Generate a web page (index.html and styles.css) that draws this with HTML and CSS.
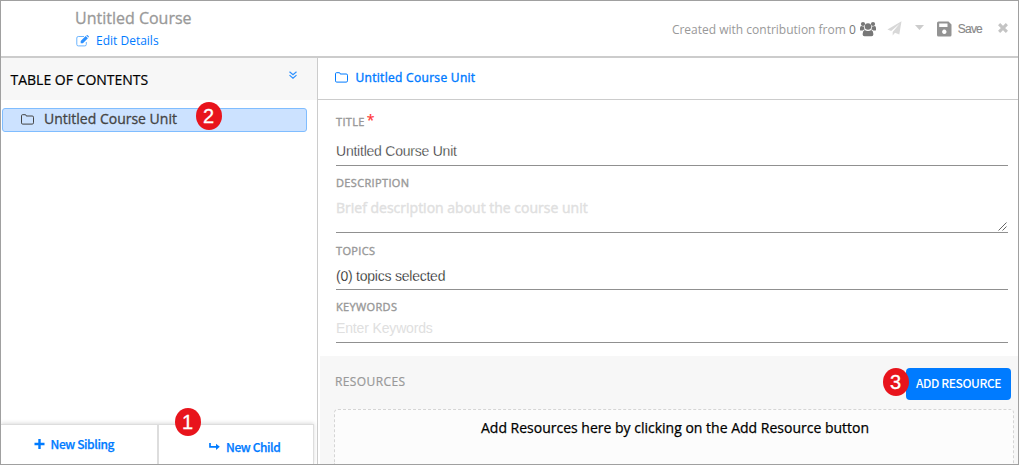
FILE: index.html
```html
<!DOCTYPE html>
<html lang="en">
<head>
<meta charset="utf-8">
<title>Untitled Course</title>
<link rel="stylesheet" href="styles.css">
</head>
<body>
<div class="frame">
  <header class="header">
    <div class="course">
      <div class="course-name">Untitled Course</div>
      <a class="edit"><svg width="13" height="12" viewBox="0 0 13 12"><path d="M10.3 7v2.4a1.5 1.5 0 0 1-1.5 1.5H2.3A1.5 1.5 0 0 1 .8 9.4V3a1.5 1.5 0 0 1 1.500-1.500h5.700" fill="none" stroke="#5aabff" stroke-width=".9"/><path d="M4.700 8.300V6.100L9.700 1.100l2.200 2.200-5 5zM10.300.6l.6-.5q.4-.2.8.2l1 1q.4.4.1.8l-.4.5z" fill="#2c90ff"/></svg><span>Edit Details</span></a>
    </div>
    <div class="tools">
      <span class="contrib">Created with contribution from <b>0</b></span>
      <svg class="i-users" width="16" height="16" viewBox="0 0 16 16" fill="#777"><circle cx="3" cy="3" r="2.100"/><circle cx="13" cy="3" r="2.100"/><path d="M0 9V7q0-2 1.500-2 1.500.8 2.700.2-.5 2.200.7 3.400-1.500 0-2.200 1H1.300Q0 9.600 0 9zM16 9V7q0-2-1.500-2-1.500.8-2.700.2.500 2.200-.7 3.400 1.500 0 2.200 1h1.400Q16 9.600 16 9z"/><circle cx="8" cy="5.500" r="3.200"/><path d="M4.600 9Q8 11 11.400 9q2 .8 2 4.200Q13.400 15.300 11.500 15.300h-7Q2.600 15.300 2.600 13.200 2.600 9.800 4.600 9z"/></svg>
      <svg class="i-send" width="15" height="15" viewBox="0 0 15 15" fill="#d8d8d8"><path d="M14.500.3 12.300 13.500 8 11.700 5.700 14.500V10.900L12.600 2.800 4.200 10.100.4 8.600z"/></svg>
      <svg class="i-caret" width="9" height="5" viewBox="0 0 9 5"><path d="M0 0h9L4.500 5z" fill="#ccc"/></svg>
      <svg class="i-save" width="15" height="16" viewBox="0 0 15 16"><path fill-rule="evenodd" d="M1.500.5h10L14.500 3.500V14a1.500 1.500 0 0 1-1.500 1.500H1.500A1.500 1.500 0 0 1 0 14V2A1.500 1.500 0 0 1 1.500.5zM2.200 2.500v3.500h8.300V2.500zM7.300 8.600a2.200 2.200 0 1 0 .01 0z" fill="#939393"/></svg>
      <span class="save">Save</span>
      <svg class="i-close" width="10" height="10" viewBox="0 0 10 10"><path d="M1.100 1.100 8.900 8.900M8.900 1.100 1.100 8.900" stroke="#c4c4c4" stroke-width="3"/></svg>
    </div>
  </header>
  <div class="body">
    <aside class="side">
      <div class="toc"><span>TABLE OF CONTENTS</span><svg width="8" height="8" viewBox="0 0 8 8"><path d="M.5.700 4 3.700 7.500.700M.5 4.100 4 7.100 7.500 4.100" fill="none" stroke="#2c90ff" stroke-width="1.200"/></svg></div>
      <div class="node">
        <svg width="13" height="11" viewBox="0 0 13 11"><path d="M.5 1.700Q.5.700 1.500.700h2.700q1 0 1 1v.3h6q1.300 0 1.300 1.200v5.600q0 1.300-1.300 1.300H1.700Q.5 10.100.5 8.900z" fill="none" stroke="currentColor"/></svg>
        <span>Untitled Course Unit</span>
        <i class="badge badge-2">2</i>
      </div>
      <div class="actions">
        <a class="sibling"><svg width="11" height="10" viewBox="0 0 11 10"><path d="M5.500 0v10M.5 5h10" stroke="currentColor" stroke-width="2.400"/></svg><span>New Sibling</span></a>
        <a class="child"><svg width="11" height="9" viewBox="0 0 11 9"><path d="M1 1v3.800h6.500" fill="none" stroke="currentColor" stroke-width="1.700"/><path d="M7 1.700 10.800 4.800 7 7.900z" fill="currentColor"/></svg><span>New Child</span></a>
        <i class="badge badge-1">1</i>
      </div>
    </aside>
    <main class="main">
      <div class="crumb"><svg width="13" height="11" viewBox="0 0 13 11"><path d="M.5 1.700Q.5.700 1.500.700h2.700q1 0 1 1v.3h6q1.300 0 1.300 1.200v5.600q0 1.300-1.300 1.300H1.700Q.5 10.100.5 8.900z" fill="none" stroke="currentColor"/></svg><span>Untitled Course Unit</span></div>
      <div class="form">
        <div class="field f-title"><label>TITLE<em>*</em></label><p>Untitled Course Unit</p></div>
        <div class="field f-desc"><label>DESCRIPTION</label><p class="hint">Brief description about the course unit</p>
          <svg class="grip" width="9" height="9" viewBox="0 0 9 9"><path d="M.5 8.500 8.500.5M4.500 8.500 8.500 4.500" stroke="#555" stroke-width=".9"/></svg></div>
        <div class="field f-topics"><label>TOPICS</label><p>(0) topics selected</p></div>
        <div class="field f-keys"><label>KEYWORDS</label><p class="hint">Enter Keywords</p></div>
      </div>
      <section class="resources">
        <div class="res-head"><h2>RESOURCES</h2><div class="add-wrap"><button class="add">ADD RESOURCE</button><i class="badge badge-3">3</i></div></div>
        <div class="drop"><span>Add Resources here by clicking on the Add Resource button</span></div>
      </section>
    </main>
  </div>
</div>
</body>
</html>
```
FILE: styles.css
```css
* { box-sizing: border-box; margin: 0; padding: 0; }
body { background: #fff; font-family: "Open Sans", sans-serif; white-space: nowrap; overflow: hidden; }
svg { display: block; flex: none; }
.frame { width: 1019px; height: 465px; border: 1px solid #a0a0a0; display: flex; flex-direction: column; overflow: hidden; }
.header { height: 57px; border-bottom: 2px solid #ccc; display: flex; justify-content: space-between; flex: none; }
.course { padding: 7px 0 0 74px; }
.course-name { font-size: 16px; line-height: 20px; font-weight: 500; color: #999; -webkit-text-stroke: .3px #999; }
.edit { display: flex; align-items: center; gap: 7px; padding: 4px 0 0 1px; font-size: 12px; line-height: 18px; color: #007bff; }
.tools { display: flex; align-items: center; padding-right: 10px; height: 55px; color: #999; }
.contrib { font-size: 12px; padding-top: 1px; }
.contrib b { font-weight: 400; color: #777; }
.i-users { margin-left: 4px; }
.i-send { margin-left: 11px; }
.i-caret { margin: 0 0 2px 13px; }
.i-save { margin-left: 13px; }
.save { font: 12px "Liberation Sans", Arial, sans-serif; color: #888; margin-left: 6px; letter-spacing: -.8px; -webkit-text-stroke: .15px #888; }
.i-close { margin: 0 0 1px 16px; }
.body { display: flex; flex: 1; min-height: 0; }
.side { width: 317px; border-right: 1px solid #ccc; display: flex; flex-direction: column; }
.toc { height: 42px; background: #f7f7f7; display: flex; justify-content: space-between; padding: 12px 20px 0 9.5px; font-size: 14px; line-height: 20px; color: #000; -webkit-text-stroke: .2px #000; }
.toc svg { margin-top: 1px; }
.node { position: relative; margin: 8px 0 0 1px; width: 305px; height: 24px; background: #cce2ff; border: 1px solid #80bdff; border-radius: 3px; display: flex; align-items: center; padding: 0 0 2px 18px; gap: 10px; font-size: 14px; line-height: 20px; color: #444; -webkit-text-stroke: .3px #444; }
.badge { position: absolute; width: 26px; height: 28px; border-radius: 50%; background: #e8141c; color: #fff; font: 20px/28px "Liberation Sans", Arial, sans-serif; letter-spacing: 0; text-align: center; -webkit-text-stroke: .3px #fff; }
.badge-2 { left: 192.500px; top: -7px; }
.actions { position: relative; margin-top: auto; height: 40px; width: 313px; display: flex; border-top: 1px solid #ddd; border-right: 1px solid #ddd; box-shadow: 0 -1px 4px rgba(0,0,0,.14); color: #007bff; font: 500 12px/20px "Noto Sans CJK SC", sans-serif; letter-spacing: -.4px; -webkit-text-stroke: .25px #007bff; }
.actions a { display: flex; align-items: center; }
.sibling { width: 158px; border-right: 2px solid #ddd; padding: 0 0 1px 32.500px; gap: 6px; }
.child { padding: 4px 0 0 49.500px; gap: 6.500px; }
.badge-1 { left: 173.500px; top: -17px; }
.main { flex: 1; min-width: 0; display: flex; flex-direction: column; }
.crumb { height: 42px; border-bottom: 1px solid #ccc; display: flex; align-items: center; padding: 0 0 3px 17px; gap: 7.500px; color: #007bff; font-size: 12px; letter-spacing: .3px; -webkit-text-stroke: .4px #007bff; }
.form { padding: 0 10px 0 18px; height: 256px; }
.field { position: relative; border-bottom: 1px solid #909090; }
.field label { display: block; font-size: 11px; line-height: 16px; letter-spacing: .35px; color: #999; -webkit-text-stroke: .4px #999; }
.field p { line-height: 20px; font-size: 14px; letter-spacing: -.23px; color: #222; font-family: "Liberation Sans", Arial, sans-serif; -webkit-text-stroke: .3px #fff; }
.field em { color: #f33; font: 14px/10px "Open Sans", sans-serif; margin-left: 2px; position: relative; top: -1px; -webkit-text-stroke: .2px #f33; }
.f-title { height: 66px; padding-top: 14px; }
.f-title p { margin-top: 11px; }
.f-desc { height: 67px; padding-top: 9px; }
.f-desc p { margin-top: 7px; font-family: "Open Sans", sans-serif; font-size: 14px; letter-spacing: 0; -webkit-text-stroke: .4px #e0e0e0; }
.f-topics { height: 57px; padding-top: 10px; }
.f-topics p { margin-top: 7px; color: #000; }
.f-keys { height: 53px; padding-top: 9px; }
.f-keys p { margin-top: 3px; letter-spacing: -.15px; -webkit-text-stroke: 0; }
.field .hint { color: #e0e0e0; }
.grip { position: absolute; right: 1px; bottom: 1px; }
.resources { margin-left: 2px; flex: 1; background: #f7f7f7; padding: 12px 4px 0 14px; display: flex; flex-direction: column; }
.res-head { display: flex; justify-content: space-between; align-items: flex-start; height: 41px; padding: 0 3px 0 1px; }
.res-head h2 { font-size: 12px; line-height: 27px; font-weight: 400; letter-spacing: .4px; color: #999; -webkit-text-stroke: .2px #999; }
.add-wrap { position: relative; }
.add { display: block; width: 105px; height: 32px; border: 0; border-radius: 4px; background: #007bff; color: #fff; font: 500 12px/28px "Noto Sans CJK SC", sans-serif; letter-spacing: -.4px; padding-bottom: 3px; }
.badge-3 { left: -23.500px; top: 0; }
.drop { flex: 1; border: 1px dashed #d5d5d5; border-bottom: 0; border-radius: 4px 4px 0 0; background: #fcfcfc; text-align: center; padding: 8px 0 0 2px; font-size: 14px; line-height: 20px; color: #000; -webkit-text-stroke: .25px #000; }
```
